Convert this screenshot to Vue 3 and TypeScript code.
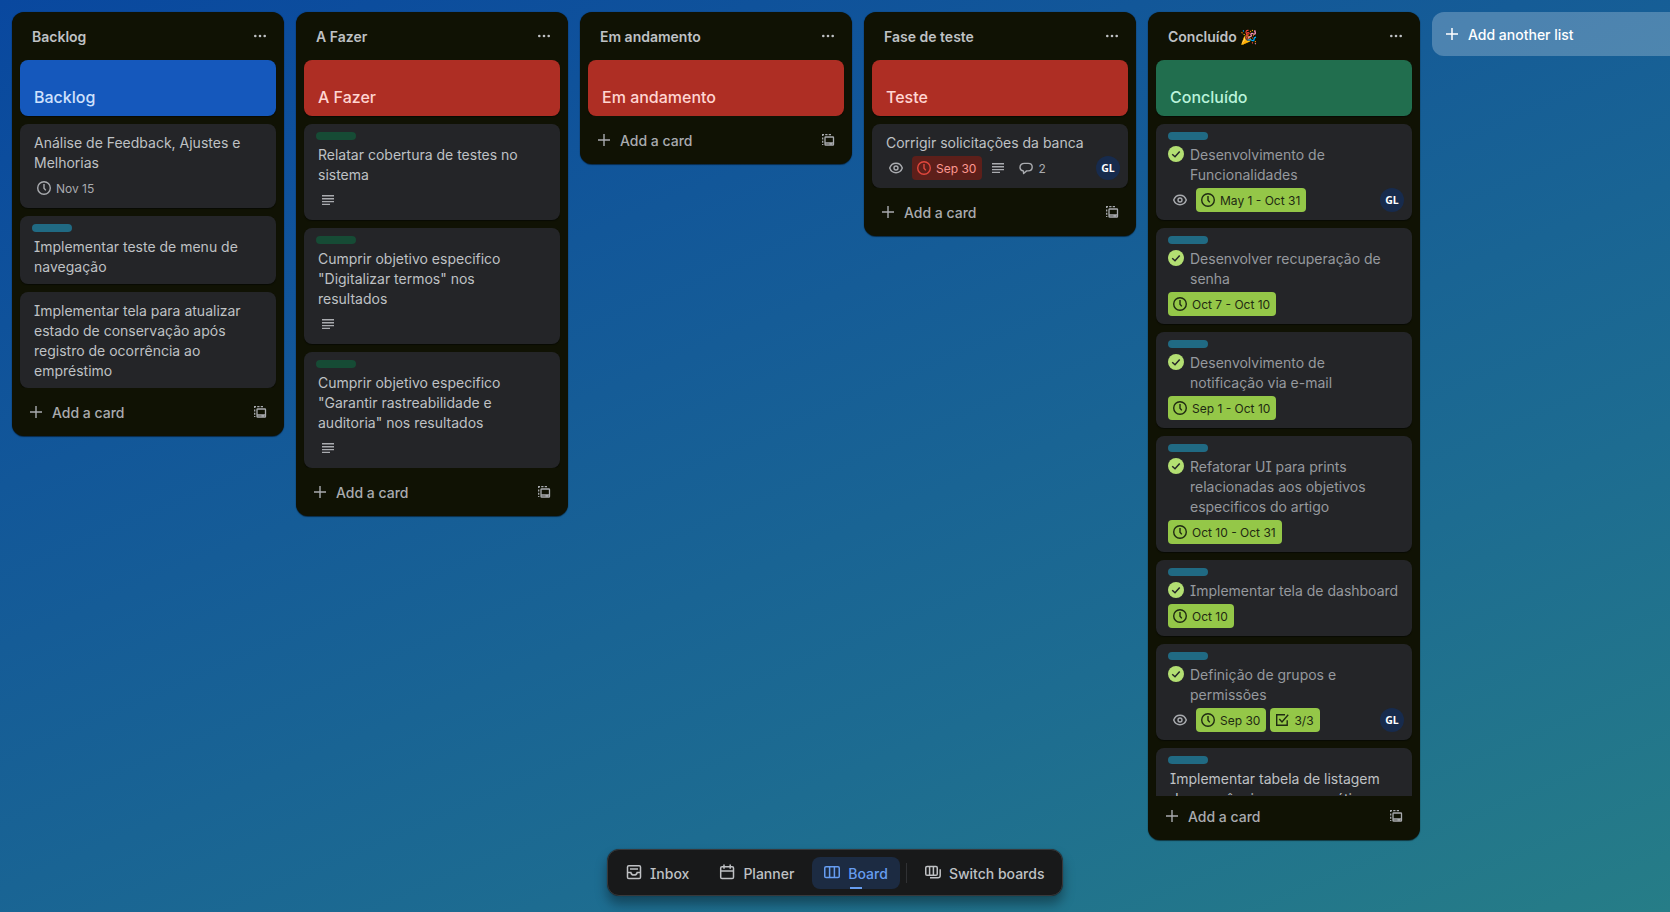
<script setup lang="ts">
interface Badge {
  kind: 'watch' | 'date' | 'desc' | 'comments' | 'check'
  text?: string
  tone?: 'green' | 'red'
}
interface Card {
  title: string
  label?: 'green' | 'sky'
  done?: boolean
  badges?: Badge[]
  member?: string
}
interface List {
  name: string
  cover: string
  color: 'blue' | 'red' | 'green'
  cards: Card[]
}

const desc: Badge = { kind: 'desc' }
const watch: Badge = { kind: 'watch' }
const due = (text: string): Badge => ({ kind: 'date', text, tone: 'green' })

const lists: List[] = [
  {
    name: 'Backlog', cover: 'Backlog', color: 'blue',
    cards: [
      { title: 'Análise de Feedback, Ajustes e Melhorias', badges: [{ kind: 'date', text: 'Nov 15' }] },
      { title: 'Implementar teste de menu de navegação', label: 'sky' },
      { title: 'Implementar tela para atualizar estado de conservação após registro de ocorrência ao empréstimo' },
    ],
  },
  {
    name: 'A Fazer', cover: 'A Fazer', color: 'red',
    cards: [
      { title: 'Relatar cobertura de testes no sistema', label: 'green', badges: [desc] },
      { title: 'Cumprir objetivo especifico "Digitalizar termos" nos resultados', label: 'green', badges: [desc] },
      { title: 'Cumprir objetivo especifico "Garantir rastreabilidade e auditoria" nos resultados', label: 'green', badges: [desc] },
    ],
  },
  { name: 'Em andamento', cover: 'Em andamento', color: 'red', cards: [] },
  {
    name: 'Fase de teste', cover: 'Teste', color: 'red',
    cards: [
      {
        title: 'Corrigir solicitações da banca',
        badges: [watch, { kind: 'date', text: 'Sep 30', tone: 'red' }, desc, { kind: 'comments', text: '2' }],
        member: 'GL',
      },
    ],
  },
  {
    name: 'Concluído 🎉', cover: 'Concluído', color: 'green',
    cards: [
      { title: 'Desenvolvimento de Funcionalidades', label: 'sky', done: true, badges: [watch, due('May 1 - Oct 31')], member: 'GL' },
      { title: 'Desenvolver recuperação de senha', label: 'sky', done: true, badges: [due('Oct 7 - Oct 10')] },
      { title: 'Desenvolvimento de notificação via e-mail', label: 'sky', done: true, badges: [due('Sep 1 - Oct 10')] },
      { title: 'Refatorar UI para prints relacionadas aos objetivos especificos do artigo', label: 'sky', done: true, badges: [due('Oct 10 - Oct 31')] },
      { title: 'Implementar tela de dashboard', label: 'sky', done: true, badges: [due('Oct 10')] },
      { title: 'Definição de grupos e permissões', label: 'sky', done: true, badges: [watch, due('Sep 30'), { kind: 'check', text: '3/3', tone: 'green' }], member: 'GL' },
      { title: 'Implementar tabela de listagem de ocorrência em uma prática', label: 'sky' },
    ],
  },
]
</script>

<template>
  <div class="board">
    <main class="lists">
      <section v-for="list in lists" :key="list.name" class="list">
        <header class="list-head">
          <h2>{{ list.name }}</h2>
          <svg class="dots" width="16" height="16" viewBox="0 0 16 16" fill="currentColor">
            <circle cx="3.3" cy="8" r="1.3" /><circle cx="8" cy="8" r="1.3" /><circle cx="12.7" cy="8" r="1.3" />
          </svg>
        </header>
        <div class="cards">
          <article class="cover" :class="list.color">{{ list.cover }}</article>
          <article v-for="card in list.cards" :key="card.title" class="card">
            <div v-if="card.label" class="label" :class="card.label"></div>
            <div class="title" :class="{ done: card.done }">
              <svg v-if="card.done" class="tick" width="16" height="16" viewBox="0 0 16 16">
                <circle cx="8" cy="8" r="8" fill="#b3df72" />
                <path d="M4.2 8.2 7 10.7l4.7-5.3" fill="none" stroke="#242528" stroke-width="1.5" />
              </svg>
              <span>{{ card.title }}</span>
            </div>
            <div v-if="card.badges" class="foot">
              <div class="badges">
                <span v-for="(b, i) in card.badges" :key="i" class="badge" :class="b.tone">
                  <svg class="ico" width="16" height="16" viewBox="0 0 16 16" fill="none" stroke="currentColor" stroke-width="1.4">
                    <template v-if="b.kind === 'watch'">
                      <path d="M1.7 8C2.7 5.2 5.1 3.3 8 3.3s5.3 1.9 6.3 4.7c-1 2.8-3.4 4.7-6.3 4.7S2.7 10.8 1.7 8Z" />
                      <circle cx="8" cy="8" r="2" />
                    </template>
                    <template v-else-if="b.kind === 'date'">
                      <circle cx="8" cy="8" r="6.3" />
                      <path d="M8 4v4.2l1.8 2.2" />
                    </template>
                    <path v-else-if="b.kind === 'desc'" d="M2 3.800h12M2 6.700h12M2 9.600h12M2 12.400h8" />
                    <path v-else-if="b.kind === 'comments'" d="M5.300 10.900C3.200 10.500 2 9.200 2 7.400 2 5 3.800 3.400 6.400 3.400h3.800c2.400 0 4 1.500 4 3.700s-1.600 3.800-4 3.800H8.600l-3 2.600Z" stroke-linejoin="round" />
                    <template v-else>
                      <path d="M13.200 8.200v5.100H2.700V2.700h8.300" />
                      <path d="m5.300 7 2.700 3 6.200-7.200" />
                    </template>
                  </svg>
                  <span v-if="b.text" class="btext">{{ b.text }}</span>
                </span>
              </div>
              <span v-if="card.member" class="avatar">{{ card.member }}</span>
            </div>
          </article>
        </div>
        <footer class="add">
          <svg width="16" height="16" viewBox="0 0 16 16" fill="none" stroke="currentColor" stroke-width="1.4"><path d="M8 2v12M2 8h12" /></svg>
          <span>Add a card</span>
          <svg class="template" width="16" height="16" viewBox="0 0 16 16" fill="none" stroke="currentColor" stroke-width="1.3">
            <rect x="5" y="5" width="8.5" height="8" rx=".6" />
            <path d="M5 11h8.5M9.5 12h2.5" />
            <path d="M2 2.700h2M5.200 2.700h2.300M8.700 2.700H11M2.700 2.700v1.400M2.700 5.500v2M2.700 8.800v2M2.700 12v1" />
          </svg>
        </footer>
      </section>
      <button class="add-list">
        <svg width="16" height="16" viewBox="0 0 16 16" fill="none" stroke="currentColor" stroke-width="1.5"><path d="M8 2v12M2 8h12" /></svg>
        <span>Add another list</span>
      </button>
    </main>

    <nav class="dock">
      <a class="tab spaced">
        <svg width="16" height="16" viewBox="0 0 16 16" fill="none" stroke="currentColor" stroke-width="1.5">
          <rect x="1.5" y="1.7" width="13" height="12.8" rx="1.3" />
          <path d="M4 5h8M1.500 8.500h3.300c.4 1.700 1.400 2.600 3.200 2.600s2.800-.9 3.200-2.600h3.300" />
        </svg>
        <span>Inbox</span>
      </a>
      <a class="tab spaced">
        <svg width="16" height="16" viewBox="0 0 16 16" fill="none" stroke="currentColor" stroke-width="1.5">
          <rect x="1.7" y="2.7" width="12.8" height="11.8" rx="1.3" />
          <path d="M1.700 7h12.800M5 .500v4.200M11.200.500v4.200" />
        </svg>
        <span>Planner</span>
      </a>
      <a class="tab active">
        <svg width="16" height="16" viewBox="0 0 16 16" fill="none" stroke="currentColor" stroke-width="1.5">
          <rect x=".75" y="2.7" width="14.5" height="10.8" rx="1.3" />
          <path d="M5.600 2.700v10.800M10.400 2.700v10.800" />
        </svg>
        <span>Board</span>
      </a>
      <i class="rule"></i>
      <a class="tab">
        <svg width="16" height="16" viewBox="0 0 16 16" fill="none" stroke="currentColor" stroke-width="1.5">
          <rect x=".75" y="2.4" width="11.5" height="8.8" rx="1.3" />
          <path d="M4.600 2.400v8.800M8.400 2.400v8.800M15.200 5.200v6.300c0 1.400-1 2.300-2.300 2.300H5" />
        </svg>
        <span>Switch boards</span>
      </a>
    </nav>
  </div>
</template>

<style>
body {
  margin: 0;
  overflow: hidden;
}
</style>

<style scoped>
.board {
  position: relative;
  box-sizing: border-box;
  width: 100vw;
  height: 100vh;
  overflow: hidden;
  background: linear-gradient(157deg, #09489f 0%, #155c97 40%, #1d6c91 70%, #267d87 100%);
  font-family: Inter, "Liberation Sans", sans-serif;
  font-feature-settings: "cv08";
  font-size: 14px;
  line-height: 20px;
  color: #bfc1c4;
}
.lists {
  display: flex;
  align-items: flex-start;
  gap: 12px;
  padding: 12px;
}
.list {
  flex: 0 0 272px;
  display: flex;
  flex-direction: column;
  max-height: 828px;
  border-radius: 12px;
  background: #101204;
  box-shadow: 0 1px 1px #01040480, 0 0 1px #01040480;
}
.list-head {
  display: flex;
  align-items: center;
  justify-content: space-between;
  flex: none;
  height: 48px;
  padding: 0 16px 0 20px;
}
h2 {
  margin: 2px 0 0;
  font-size: 14px;
  font-weight: 600;
  line-height: 20px;
}
.cards {
  display: flex;
  flex-direction: column;
  gap: 8px;
  min-height: 0;
  padding: 0 8px;
  overflow: hidden;
}
.cover,
.card {
  flex: none;
  box-sizing: border-box;
  border-radius: 8px;
  box-shadow: 0 1px 1px #01040480;
}
.cover {
  height: 56px;
  padding: 27px 14px 0;
  font-size: 16px;
  font-weight: 450;
}
.cover.blue { background: #1558bc; color: #cfe1fd; }
.cover.red { background: #ae2e24; color: #ffd5d2; }
.cover.green { background: #216e4e; color: #baf3db; }
.card {
  padding: 8px 12px;
  background: #242528;
}
.label {
  width: 40px;
  height: 8px;
  margin-bottom: 4px;
  border-radius: 4px;
}
.label.green { background: #164b35; }
.label.sky { background: #206a83; }
.title {
  display: flex;
  margin-bottom: -1px;
  padding: 1px 2px 0;
}
.title.done {
  padding: 1px 0 0;
  gap: 6px;
  color: #96999e;
}
.tick {
  flex: none;
  margin-top: 1px;
}
.foot {
  display: flex;
  justify-content: space-between;
  padding-top: 4px;
  margin-right: -4px;
}
.badges {
  display: flex;
  gap: 4px;
}
.badge {
  display: flex;
  align-items: center;
  height: 24px;
  padding: 0 4px;
  border-radius: 4px;
  font-size: 12px;
  color: #a9abaf;
}
.btext { padding: 1px 2px 0 4px; }
.badge.green { background: #94c748; color: #1f2a12; }
.badge.red { background: #5d1f1a; color: #fd9891; }
.badge.red .ico { color: #e2483d; }
.avatar {
  width: 24px;
  height: 24px;
  border-radius: 50%;
  background: #172b4d;
  color: #fff;
  font: 700 10.5px/24px "Noto Sans", sans-serif;
  text-align: center;
}
.add {
  flex: none;
  display: flex;
  align-items: center;
  gap: 8px;
  height: 40px;
  padding: 0 16px 4px;
  color: #a9abaf;
  font-weight: 500;
}
.list:not(:last-of-type) .add { padding-top: 4px; }
.add span,
.add-list span { padding-top: 2px; }
.template { margin-left: auto; }
.add-list {
  flex: 0 0 272px;
  display: flex;
  align-items: center;
  gap: 8px;
  height: 44px;
  padding: 0 12px;
  border: 0;
  border-radius: 12px;
  background: #ffffff3d;
  color: #fff;
  font: inherit;
  font-weight: 500;
}
.dock {
  position: absolute;
  left: 50%;
  bottom: 16px;
  transform: translateX(-50%);
  display: flex;
  align-items: center;
  box-sizing: border-box;
  width: 456px;
  height: 47px;
  padding: 1px 6px 0;
  border: 1px solid #37393c;
  border-radius: 12px;
  background: #18191a;
  box-shadow: 0 8px 12px #0104045c, 0 0 1px #01040480;
  font-weight: 500;
  white-space: nowrap;
}
.tab {
  position: relative;
  flex: none;
  display: flex;
  align-items: center;
  gap: 8px;
  height: 32px;
  padding: 0 12px;
  border-radius: 8px;
}
.tab.spaced { margin-right: 6px; }
.tab svg { margin-top: -3px; }
.tab span { padding-top: 1px; }
.tab.active { background: #1c2b42; color: #669df1; }
.tab.active::after {
  content: "";
  position: absolute;
  left: 38px;
  bottom: 0;
  width: 12px;
  height: 2px;
  background: #669df1;
}
.rule {
  flex: none;
  width: 1px;
  height: 20px;
  margin: 0 6px;
  background: #303134;
}
</style>
